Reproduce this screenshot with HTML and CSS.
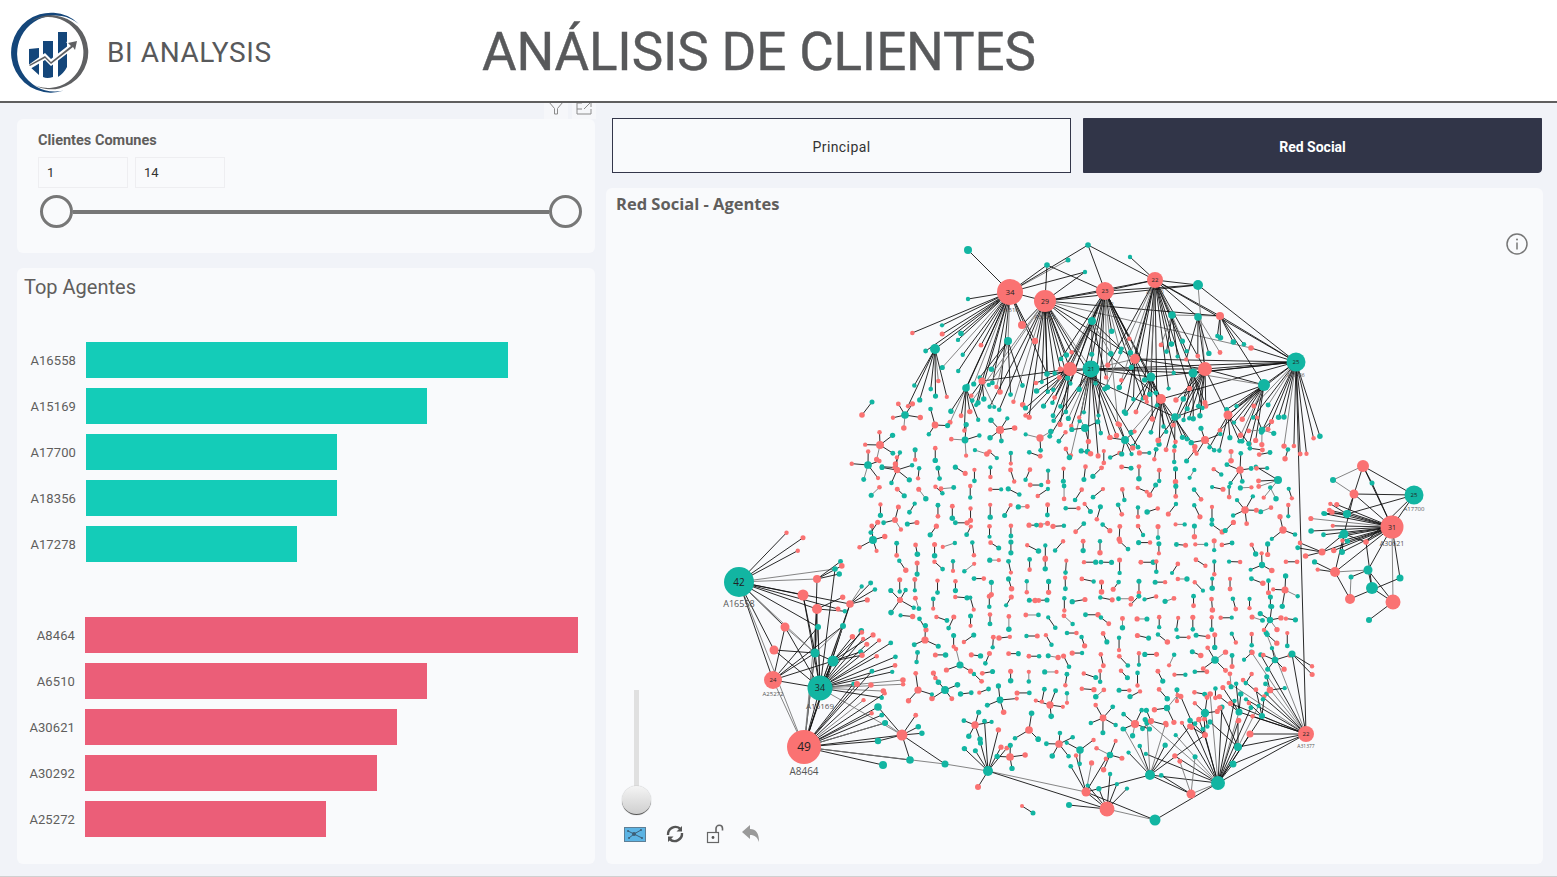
FILE: index.html
```html
<!DOCTYPE html>
<html lang="es">
<head>
    <meta charset="UTF-8">
    <title>Análisis de Clientes</title>
    <link rel="stylesheet" href="styles.css">
</head>
<body>
    <header class="top-bar">
        <svg class="logo" viewBox="0 0 90 90" width="90" height="90">
            <path fill="#14467a" d="M76 18 A40 40 0 1 0 61 84.5 A38 38 0 1 1 76 18 Z"/>
            <path fill="#5f6062" d="M27 16 A37 37 0 1 1 31 79 A35.4 35.4 0 1 0 27 16 Z"/>
            <path fill="#14467a" d="M26 43 L36 42 L36 69 L26 60 Z M40 35 L50 35 L50 71 Q44 73 40 71 Z M55 26 L64 26 L64 61 Q61 67 55 71 Z"/>
            <path fill="#ffffff" d="M24 60 L42 47 L48 53 L66 39 L63 36 L76 33 L73 46 L70 43 L48 60 L42 54 L27 63 Z"/>
            <path fill="#5f6062" d="M26 59 L42 50 L48 56 L68 40 L65 37 L74 35 L72 44 L70 41 L48 58 L42 52 L27 60 Z"/>
        </svg>
        <div class="brand">BI ANALYSIS</div>
        <h1 class="page-title">ANÁLISIS DE CLIENTES</h1>
    </header>

    <main class="board">
        <section class="left-col">
            <div class="card slicer">
                <div class="visual-tools">
                    <span class="tool-box">
                        <svg viewBox="0 0 16 16" width="16" height="16"><path d="M1 2 H15 L9.5 8.5 V14 H6.5 V8.5 Z" fill="none" stroke="#8a8a8a"/></svg>
                    </span>
                    <span class="tool-box">
                        <svg viewBox="0 0 16 16" width="16" height="16"><path d="M6 3 H1 V14 H15 V9 M9 2 H15 V7 M15 2 L8 9 M1 9 H6" fill="none" stroke="#8a8a8a"/></svg>
                    </span>
                </div>
                <div class="slicer-label">Clientes Comunes</div>
                <div class="slicer-inputs">
                    <div class="slicer-input">1</div>
                    <div class="slicer-input">14</div>
                </div>
                <div class="slider">
                    <span class="handle"></span>
                    <span class="track"></span>
                    <span class="handle"></span>
                </div>
            </div>

            <div class="card agents">
                <div class="agents-title">Top Agentes</div>
                <div class="bars bars-teal">
                    <div class="bar-row"><span class="bar-label">A16558</span><span class="bar" style="width:422px"></span></div>
                    <div class="bar-row"><span class="bar-label">A15169</span><span class="bar" style="width:341px"></span></div>
                    <div class="bar-row"><span class="bar-label">A17700</span><span class="bar" style="width:251px"></span></div>
                    <div class="bar-row"><span class="bar-label">A18356</span><span class="bar" style="width:251px"></span></div>
                    <div class="bar-row"><span class="bar-label">A17278</span><span class="bar" style="width:211px"></span></div>
                </div>
                <div class="bars bars-red">
                    <div class="bar-row"><span class="bar-label">A8464</span><span class="bar" style="width:493px"></span></div>
                    <div class="bar-row"><span class="bar-label">A6510</span><span class="bar" style="width:342px"></span></div>
                    <div class="bar-row"><span class="bar-label">A30621</span><span class="bar" style="width:312px"></span></div>
                    <div class="bar-row"><span class="bar-label">A30292</span><span class="bar" style="width:292px"></span></div>
                    <div class="bar-row"><span class="bar-label">A25272</span><span class="bar" style="width:241px"></span></div>
                </div>
            </div>
        </section>

        <section class="right-col">
            <div class="tabs">
                <button class="tab">Principal</button>
                <button class="tab tab-active">Red Social</button>
            </div>
            <div class="card network">
                <div class="network-title">Red Social - Agentes</div>
                <svg id="graph" class="graph" viewBox="606 188 937 676" width="937" height="676"></svg>

                <svg class="info-icon" viewBox="0 0 24 24" width="24" height="24">
                    <circle cx="12" cy="12" r="10" fill="none" stroke="#777" stroke-width="1.5"/>
                    <circle cx="12" cy="7.5" r="1" fill="#777"/>
                    <path d="M12 10.5 V17.5" stroke="#777" stroke-width="1.5"/>
                </svg>

                <div class="zoom-track"></div>
                <div class="zoom-knob"></div>
                <div class="graph-tools">
                    <svg viewBox="0 0 22 15" width="22" height="15">
                        <rect x="0.5" y="0.5" width="21" height="14" fill="#5cb4e4" stroke="#5d7f96"/>
                        <path d="M4 4 L10 7 L5 11 M10 7 L17 3 M10 7 L18 11" stroke="#3d5f78" fill="none"/>
                        <circle cx="10" cy="7" r="2" fill="#3d5f78"/>
                        <circle cx="4" cy="4" r="1" fill="#3d5f78"/>
                        <circle cx="5" cy="11" r="1" fill="#3d5f78"/>
                        <circle cx="17" cy="3" r="1" fill="#3d5f78"/>
                        <circle cx="18" cy="11" r="1" fill="#3d5f78"/>
                    </svg>
                    <svg viewBox="0 0 20 20" width="20" height="20">
                        <path d="M3 11 A7.5 7.5 0 0 1 15 4.5 M17 9 A7.5 7.5 0 0 1 5 15.5" fill="none" stroke="#555" stroke-width="2.4"/>
                        <path d="M17 2 V7.5 H11.5 Z M3 18 V12.5 H8.5 Z" fill="#555"/>
                    </svg>
                    <svg viewBox="0 0 20 20" width="20" height="20">
                        <rect x="2.5" y="8.5" width="11" height="10" fill="none" stroke="#666" stroke-width="1.2"/>
                        <circle cx="8" cy="13.5" r="1.4" fill="#555"/>
                        <path d="M11 8 V4.5 A3.2 3.2 0 0 1 17.5 4.5 V6.5" fill="none" stroke="#666" stroke-width="1.6"/>
                    </svg>
                    <svg viewBox="0 0 20 20" width="20" height="20">
                        <path d="M1 8 L9 1 V5 C15 5 18 9 18 18 C16 13 14 11 9 11 V15 Z" fill="#9a9a9a"/>
                    </svg>
                </div>
            </div>
        </section>
    </main>

    <script src="graph.js"></script>
</body>
</html>
```

FILE: styles.css
```css
* {
    box-sizing: border-box;
}
body {
    margin: 0;
    width: 1557px;
    height: 877px;
    overflow: hidden;
    background-color: #f1f3f8;
    border-bottom: 1px solid #d0d0d0;
    font-family: Roboto, "Liberation Sans", sans-serif;
    color: #605e5c;
}
.top-bar {
    height: 103px;
    background-color: #fff;
    border-bottom: 2px solid #5f5f5f;
    display: flex;
    align-items: center;
    position: relative;
    z-index: 2;
}
.logo {
    margin-left: 3px;
    flex: none;
}
.brand {
    margin-left: 14px;
    margin-top: 3px;
    width: 375px;
    font-size: 28px;
    letter-spacing: 0.6px;
    color: #58595b;
}
.page-title {
    margin: 3px 0 0;
    font-size: 53px;
    font-weight: 400;
    letter-spacing: -0.15px;
    color: #58595b;
    -webkit-text-stroke: 0.4px #58595b;
}
.board {
    display: grid;
    grid-template-columns: 578px 937px;
    gap: 11px;
    padding: 15px 0 0 17px;
}
.card {
    background-color: #f9fafc;
    border-radius: 6px;
    position: relative;
}
.left-col {
    padding-top: 1px;
    display: flex;
    flex-direction: column;
    gap: 15px;
}
.slicer {
    height: 134px;
    padding: 13px 21px 0;
}
.visual-tools {
    position: absolute;
    top: -19px;
    right: -1px;
    display: flex;
    gap: 4px;
}
.tool-box {
    width: 24px;
    height: 19px;
    padding: 0 4px;
    background-color: #f6f7fa;
    display: block;
}
.slicer-label {
    font-size: 14.5px;
    font-weight: 700;
    line-height: 18px;
}
.slicer-inputs {
    display: flex;
    gap: 7px;
    margin-top: 7px;
}
.slicer-input {
    width: 90px;
    height: 31px;
    padding-left: 8px;
    border: 1px solid #eeeef1;
    font-size: 13px;
    line-height: 29px;
    color: #333;
}
.slider {
    display: flex;
    align-items: center;
    margin-top: 7px;
    margin-left: 2px;
    width: 542px;
}
.handle {
    width: 33px;
    height: 33px;
    border: 3px solid #777;
    border-radius: 50%;
    background-color: #f9fafc;
    flex: none;
}
.track {
    flex: 1;
    height: 4px;
    background-color: #777;
}
.agents {
    height: 596px;
}
.agents-title {
    padding-left: 7px;
    font-size: 20px;
    line-height: 38px;
    letter-spacing: 0;
}
.bars {
    display: flex;
    flex-direction: column;
    gap: 10px;
}
.bars-teal {
    margin-top: 36px;
}
.bars-red {
    margin-top: 55px;
}
.bar-row {
    display: flex;
    align-items: center;
    height: 36px;
}
.bar-label {
    width: 59px;
    margin-right: 10px;
    text-align: right;
    font-size: 13px;
    letter-spacing: 0.1px;
}
.bars-red .bar-label {
    width: 58px;
}
.bar {
    display: block;
    height: 36px;
}
.bars-teal .bar {
    background-color: #14ccb8;
}
.bars-red .bar {
    background-color: #eb5e78;
}
.tabs {
    display: grid;
    grid-template-columns: 459px 459px;
    gap: 12px;
    margin-left: 6px;
    height: 55px;
}
.tab {
    border: 1px solid #33364a;
    background-color: #f9fafc;
    font-family: Roboto, "Liberation Sans", sans-serif;
    font-size: 14px;
    letter-spacing: 0.4px;
    color: #333;
    padding: 2px 0 0;
}
.tab-active {
    background-color: #313548;
    color: #fff;
    font-weight: 700;
    letter-spacing: 0;
    border-bottom-right-radius: 4px;
}
.network {
    height: 676px;
    margin-top: 15px;
}
.network-title {
    position: absolute;
    top: 4px;
    left: 10px;
    font-family: "Open Sans", "Liberation Sans", sans-serif;
    font-size: 16.5px;
    font-weight: 700;
}
.graph {
    display: block;
}
.info-icon {
    position: absolute;
    top: 44px;
    right: 14px;
}
.zoom-track {
    position: absolute;
    left: 28px;
    top: 502px;
    width: 5px;
    height: 100px;
    background-color: #e0e0e0;
}
.zoom-knob {
    position: absolute;
    left: 16px;
    top: 598px;
    width: 29px;
    height: 29px;
    border-radius: 50%;
    background: linear-gradient(#f4f4f4, #cfcfcf);
    border-bottom: 1px solid #555;
    box-shadow: 0 0 1px #888;
}
.graph-tools {
    position: absolute;
    left: 18px;
    top: 636px;
    display: flex;
    align-items: center;
    gap: 19px;
}
.graph-tools svg:nth-child(3) {
    margin-left: 1px;
}
.graph-tools svg:nth-child(4) {
    margin-left: -3px;
}
```

FILE: graph.js
```js
// social network drawing, small nodes come from a seeded generator so it stays the same each load
const TEAL = "#12b5a2";
const RED = "#fa7272";
const svg = document.getElementById("graph");
const NS = "http://www.w3.org/2000/svg";

let seed = 48213;
function rnd() {
    seed = (seed + 0x6D2B79F5) | 0;
    let t = Math.imul(seed ^ (seed >>> 15), 1 | seed);
    t = (t + Math.imul(t ^ (t >>> 7), 61 | t)) ^ t;
    return ((t ^ (t >>> 14)) >>> 0) / 4294967296;
}
const between = (a, b) => a + (b - a) * rnd();

const edgeLayer = document.createElementNS(NS, "g");
const nodeLayer = document.createElementNS(NS, "g");
svg.appendChild(edgeLayer);
svg.appendChild(nodeLayer);

function edge(a, b) {
    const line = document.createElementNS(NS, "line");
    line.setAttribute("x1", a[0]);
    line.setAttribute("y1", a[1]);
    line.setAttribute("x2", b[0]);
    line.setAttribute("y2", b[1]);
    line.setAttribute("stroke", rnd() < 0.15 ? "#777" : "#111");
    line.setAttribute("stroke-width", "0.9");
    edgeLayer.appendChild(line);
}

function dot(n) {
    const c = document.createElementNS(NS, "circle");
    c.setAttribute("cx", n[0]);
    c.setAttribute("cy", n[1]);
    c.setAttribute("r", n[2]);
    c.setAttribute("fill", n[3]);
    nodeLayer.appendChild(c);
}

function text(x, y, size, str, color) {
    const t = document.createElementNS(NS, "text");
    t.setAttribute("x", x);
    t.setAttribute("y", y);
    t.setAttribute("font-size", size);
    t.setAttribute("text-anchor", "middle");
    t.setAttribute("font-family", "Open Sans, Liberation Sans, sans-serif");
    t.setAttribute("fill", color);
    t.textContent = str;
    nodeLayer.appendChild(t);
}

// hubs with number and label: x, y, r, color, number, label, number size, label size
const big = {
    a8464: [804, 747, 17, RED, "49", "A8464", 12, 10],
    a16558: [739, 582, 15, TEAL, "42", "A16558", 10, 9],
    a15169: [820, 688, 12.5, TEAL, "34", "A15169", 9, 8],
    a25272: [773, 680, 9, RED, "24", "A25272", 6, 6],
    a6510: [1010, 292, 13, RED, "34", "A6510", 8, 6],
    a30292: [1045, 301, 11, RED, "29", "A30292", 7, 6],
    a2: [1105, 291, 9, RED, "23", "A29312", 6, 5],
    a3: [1155, 280, 8, RED, "22", "A31190", 6, 5],
    a18356: [1296, 362, 9.5, TEAL, "25", "A18356", 6, 5],
    a17278: [1091, 369, 8.5, TEAL, "21", "A17278", 6, 5],
    a17700: [1414, 495, 9.5, TEAL, "25", "A17700", 6, 6],
    a30621: [1392, 527, 11.5, RED, "31", "A30621", 7, 7],
    a4: [1306, 734, 8, RED, "22", "A31377", 6, 5]
};

// middle sized nodes
const mid = {
    t1: [968, 250, 4, TEAL], t2: [1088, 245, 2.8, TEAL], t3: [1047, 265, 2.8, TEAL], t4: [1068, 260, 2.5, TEAL],
    t5: [1130, 257, 2.2, TEAL], t6: [1085, 272, 2.2, TEAL], t7: [968, 299, 2.2, TEAL], t8: [1198, 285, 5, TEAL],
    r1: [1220, 316, 4, RED], t9: [1172, 315, 3.8, TEAL], t10: [1198, 317, 3.8, TEAL], t11: [1264, 385, 6, TEAL],
    r2: [1205, 369, 7, RED], r3: [1135, 359, 5, RED], r4: [1070, 369, 7, RED], t12: [1151, 377, 4.5, TEAL],
    t13: [1193, 373, 4.5, TEAL], r5: [1161, 399, 5, RED], r6: [1228, 415, 4.5, RED], t14: [1175, 417, 3.8, TEAL],
    t15: [1092, 321, 4, TEAL], r7: [1022, 325, 4, RED], t16: [1008, 341, 4, TEAL], r8: [1035, 341, 3.2, RED],
    t17: [935, 349, 5, TEAL], t18: [966, 388, 3.8, TEAL], r9: [982, 381, 3.5, RED], t19: [1047, 374, 2.8, TEAL],
    r10: [1000, 392, 2.8, RED], t20: [1278, 480, 4, TEAL], r11: [1251, 348, 2.8, RED],

    r12: [817, 579, 4, RED], r13: [803, 595, 5.5, RED], r14: [817, 609, 5, RED], r15: [838, 609, 2.5, RED],
    r16: [850, 604, 3.8, RED], t21: [835, 569, 2.8, TEAL], t22: [818, 627, 3, TEAL], t23: [843, 626, 3, TEAL],
    r17: [785, 627, 4.5, RED], r18: [774, 650, 4.5, RED], t24: [815, 653, 4.5, TEAL], t25: [833, 661, 5.5, TEAL],
    t26: [878, 707, 3.8, TEAL], t27: [885, 723, 3, TEAL], r19: [902, 735, 5.5, RED], t28: [878, 741, 3.2, TEAL],
    t29: [910, 760, 3.8, TEAL], t30: [883, 765, 4, TEAL], t31: [945, 764, 3.5, TEAL], r20: [857, 684, 3, RED],

    r21: [1363, 466, 6, RED], r22: [1354, 494, 4.5, RED], t32: [1333, 480, 3, TEAL], t33: [1372, 483, 2.5, TEAL],
    t34: [1347, 514, 4, TEAL], t35: [1344, 534, 4.5, TEAL], t36: [1342, 552, 3, TEAL], r23: [1322, 552, 3.5, RED],
    r24: [1335, 572, 5, RED], t37: [1368, 570, 4.5, TEAL], t38: [1372, 588, 6, TEAL], r25: [1393, 602, 7.5, RED],
    r26: [1350, 599, 5, RED], t39: [1351, 577, 2.5, TEAL], t40: [1400, 578, 3.5, TEAL], t41: [1369, 620, 3, TEAL],
    r27: [1366, 542, 2.8, RED],

    t42: [1218, 783, 7, TEAL], t43: [1150, 775, 5, TEAL], t44: [988, 771, 5, TEAL], t45: [1155, 820, 5.5, TEAL],
    r28: [1107, 809, 7.5, RED], r29: [1086, 792, 4.5, RED], r30: [1191, 794, 4.5, RED], t46: [1238, 747, 4, TEAL],
    t47: [1233, 764, 3.5, TEAL], r32: [1250, 734, 3.5, RED], t48: [1069, 805, 3, TEAL],
    r33: [978, 787, 3, RED], t49: [1262, 716, 3, TEAL], t50: [1239, 712, 3.5, TEAL], r34: [1205, 735, 3, RED],
    t51: [1292, 654, 3.5, TEAL]
};

const all = Object.assign({}, big, mid);

// links between the larger nodes
const links = {
    a6510: "t1 t3 t7 t4 a30292 r7 t16 r8 t17 t18 r9 t2 r10 t19 t6",
    a30292: "t3 t6 a2 a3 t15 r7 r4 r3 t8 t19 a17278 r5 r11",
    a2: "t2 t3 a3 t8 t15 r4 r3 t12 r5",
    a3: "t2 t5 t8 t9 t10 r1 t12 t13 r3 r2 a18356",
    a18356: "t8 r1 r2 t11 a17278 r5 r6 t13 r11 t12 r3 a4",
    a17278: "r4 t12 r3 r2 t13 t19",
    r2: "t8 t10 t13 r6 r3 t11",
    t11: "r1 r6 t13 t14",
    r1: "t9 a30292",
    r4: "t15 r9 t14",
    a16558: "r12 r13 r14 r15 r16 r17 r18 t24 a8464 a25272 t21 t22",
    a8464: "a15169 a25272 t24 t25 t26 t27 r19 t28 t29 t30 t31 t22 r20 t23 r16 r14",
    a15169: "r13 r14 r17 r18 a25272 t24 t25 t22 t23 r19 r20 r16 t21",
    a25272: "t24 t25 t22 t23 r17",
    t24: "r12 r13 r14 r17 r18 t25 t23",
    r19: "t26 t27 t28 t29 t31",
    t31: "t44",
    t44: "r33 r29 r28",
    r28: "t45 t48 r29",
    r29: "t43 t45",
    t45: "t42",
    t43: "t42 r30 r34",
    t42: "r30 r34 t46 t47 t49 t50 a4 r32",
    a4: "t46 t47 t50 t49 r32 t51",
    a30621: "a17700 r21 r22 t33 t34 t35 t36 r23 r24 t40 r27 t37 r25",
    a17700: "r21 r22 t34 r27",
    r21: "r22 t32 t33",
    r22: "t34 t32 t35",
    t35: "r23 t36 r24 r27",
    t37: "r24 t38 r25 t39",
    r25: "t38 t41",
    t38: "r27",
    r26: "t39 r24 t40"
};

Object.keys(links).forEach(k => {
    links[k].split(" ").forEach(o => edge(all[k], all[o]));
});

function leaf(from, angle, len, pRed) {
    const a = angle * Math.PI / 180;
    const n = [from[0] + Math.cos(a) * len, from[1] + Math.sin(a) * len, between(2.1, 2.8), rnd() < pRed ? RED : TEAL];
    edge(from, n);
    dot(n);
    return n;
}

// fans: node, count, angle from, angle to, length from, length to, share of red leaves
const fans = [
    ["a6510", 14, 100, 160, 50, 130, 0.2], ["a30292", 15, 55, 130, 50, 130, 0.3], ["a2", 15, 60, 125, 40, 135, 0.3],
    ["a3", 13, 65, 120, 50, 130, 0.3], ["a18356", 13, 70, 135, 50, 100, 0.4], ["a17278", 13, 55, 130, 40, 95, 0.35],
    ["r4", 9, 90, 160, 30, 65, 0.35], ["r2", 8, 85, 135, 30, 65, 0.4], ["t12", 6, 60, 130, 25, 60, 0.5],
    ["r5", 7, 50, 140, 25, 60, 0.2], ["t13", 5, 60, 120, 25, 50, 0.5], ["t11", 9, 95, 150, 30, 65, 0.5],
    ["r6", 5, 40, 130, 18, 40, 0.4], ["t14", 5, 50, 130, 15, 40, 0.6], ["t17", 7, 70, 125, 30, 65, 0.4],
    ["t18", 6, 60, 130, 20, 45, 0.6], ["r9", 4, 60, 130, 15, 30, 0.4], ["t16", 5, 60, 140, 25, 55, 0.3],
    ["t15", 6, 40, 130, 30, 70, 0.3], ["r3", 5, 50, 130, 25, 60, 0.3], ["t9", 4, 60, 120, 25, 50, 0.3],
    ["t10", 4, 50, 110, 25, 50, 0.6], ["r1", 4, 40, 110, 18, 40, 0.5],
    ["a16558", 3, -48, -25, 60, 85, 1], ["a15169", 13, -58, 12, 60, 85, 0.55], ["a8464", 8, -55, -15, 70, 105, 0.6],
    ["t25", 5, -60, -5, 25, 48, 0.6], ["r16", 4, -65, -5, 16, 30, 0.5], ["r12", 3, -45, -10, 15, 30, 0.2],
    ["r14", 2, -40, 10, 18, 30, 0.5], ["r19", 3, -65, 10, 15, 30, 0.6],
    ["a4", 10, 195, 250, 55, 110, 0.35], ["t42", 12, 200, 300, 45, 100, 0.5], ["t43", 7, 215, 320, 28, 65, 0.5],
    ["r28", 5, 225, 320, 18, 38, 0.1], ["r29", 4, 225, 320, 18, 45, 0.2], ["r30", 3, 205, 290, 20, 40, 0.5],
    ["t46", 4, 210, 310, 22, 50, 0.5], ["t44", 7, 215, 320, 20, 50, 0.4], ["t50", 4, 210, 290, 16, 35, 0.5],
    ["r34", 4, 200, 280, 15, 30, 0.6], ["t49", 3, 210, 300, 15, 30, 0.5], ["t51", 2, 20, 60, 20, 30, 1],
    ["a30621", 12, 155, 205, 45, 82, 0.4], ["t34", 3, 170, 220, 14, 25, 0.6], ["r23", 3, 150, 220, 14, 25, 0.5],
    ["r24", 2, 170, 230, 15, 24, 0.1], ["t20", 4, 120, 220, 14, 26, 0.5]
];
fans.forEach(f => {
    for (let i = 0; i < f[1]; i++) {
        const ang = f[2] + (f[3] - f[2]) * (i + between(0.2, 0.8)) / f[1];
        leaf(all[f[0]], ang, between(f[4], f[5]), f[6]);
    }
});

// the even field of little pairs in the middle
const shape = [[872, 470], [905, 436], [1000, 426], [1100, 434], [1200, 436], [1288, 436], [1294, 600], [1286, 650],
    [1240, 690], [1150, 704], [1040, 708], [950, 694], [904, 650], [890, 590], [872, 540]];

function inside(x, y) {
    let hit = false;
    for (let i = 0, j = shape.length - 1; i < shape.length; j = i++) {
        const a = shape[i], b = shape[j];
        if ((a[1] > y) !== (b[1] > y) && x < (b[0] - a[0]) * (y - a[1]) / (b[1] - a[1]) + a[0]) hit = !hit;
    }
    return hit;
}

// small stars around the rim of the field
const stars = [[873, 540], [868, 465], [897, 470], [900, 600], [925, 640], [945, 690], [1010, 757], [1029, 730],
    [1059, 744], [1103, 718], [1135, 724], [1151, 721], [1167, 708], [1205, 713], [1262, 565], [1270, 620], [1245, 510],
    [1283, 530], [1215, 660], [960, 665], [1240, 470], [895, 520], [880, 445], [905, 415], [935, 425], [965, 440],
    [1000, 430], [1040, 438], [1085, 428], [1125, 440], [1205, 440], [1262, 430], [1270, 690], [1000, 700], [975, 725],
    [918, 690], [1050, 705], [1080, 750], [1110, 755], [1275, 660], [1285, 590]];

for (let x = 880; x < 1298; x += 18.5) {
    for (let y = 432; y < 712; y += 18.5) {
        const px = x + between(-2.5, 2.5);
        const py = y + between(-2.5, 2.5);
        if (!inside(px, py)) continue;
        if (stars.some(s => Math.hypot(s[0] - px, s[1] - py) < 14)) continue;
        const straight = rnd() < 0.4;
        const ang = straight ? [0, 90, 90][Math.floor(rnd() * 3)] : between(0, 180);
        const len = between(9, 13);
        const first = rnd() < 0.5;
        const n = [px, py, between(2.1, 2.6), first ? RED : TEAL];
        dot(n);
        leaf(n, ang, len, first ? 0.1 : 0.9);
    }
}

stars.forEach(s => {
    const first = rnd() < 0.5;
    const n = [s[0], s[1], between(3, 4.2), first ? RED : TEAL];
    const count = 3 + Math.floor(rnd() * 3);
    const start = between(0, 360);
    for (let i = 0; i < count; i++) {
        leaf(n, start + i * 360 / count + between(-15, 15), between(11, 17), first ? 0.3 : 0.7);
    }
    dot(n);
});

// loose pairs outside the big shape
[[[862, 415], [872, 402]], [[1022, 806], [1033, 813]]].forEach((p, i) => {
    edge(p[0], p[1]);
    dot([p[0][0], p[0][1], i ? 2 : 2.8, RED]);
    dot([p[1][0], p[1][1], 2.5, TEAL]);
});

Object.keys(mid).forEach(k => dot(mid[k]));

Object.keys(big).forEach(k => {
    const b = big[k];
    dot(b);
    text(b[0], b[1] + b[6] * 0.36, b[6], b[4], "#222");
    text(b[0], b[1] + b[2] + b[7] + 0.5, b[7], b[5], "#555");
});
```
